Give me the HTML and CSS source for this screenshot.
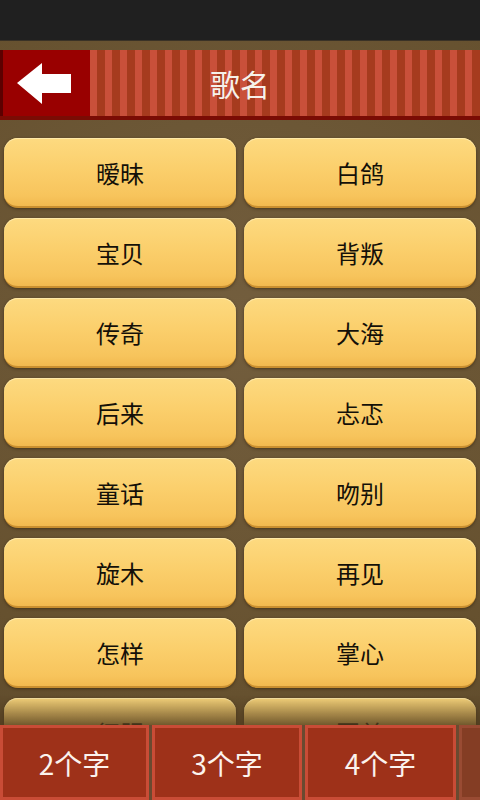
FILE: index.html
```html
<!DOCTYPE html>
<html lang="zh">
<head>
  <meta charset="UTF-8" />
  <title>歌名</title>
  <link rel="stylesheet" href="styles.css">
</head>
<body>
  <div class="status-bar"></div>

  <header class="title-bar">
    <button class="back-btn">
      <svg width="90" height="66" viewBox="0 0 90 66">
        <polygon points="17,33 42,13 42,24 71,24 71,43 42,43 42,54" fill="#ffffff" />
      </svg>
    </button>
    <h1 class="title">歌名</h1>
  </header>

  <div class="song-list">
    <button class="song">暧昧</button>
    <button class="song">白鸽</button>
    <button class="song">宝贝</button>
    <button class="song">背叛</button>
    <button class="song">传奇</button>
    <button class="song">大海</button>
    <button class="song">后来</button>
    <button class="song">忐忑</button>
    <button class="song">童话</button>
    <button class="song">吻别</button>
    <button class="song">旋木</button>
    <button class="song">再见</button>
    <button class="song">怎样</button>
    <button class="song">掌心</button>
    <button class="song">征服</button>
    <button class="song">回首</button>
  </div>

  <div class="list-fade"></div>

  <nav class="tab-bar">
    <button class="tab">2个字</button>
    <button class="tab">3个字</button>
    <button class="tab">4个字</button>
    <button class="tab tab-more"></button>
  </nav>
</body>
</html>
```

FILE: styles.css
```css
body {
  margin: 0;
  height: 800px;
  overflow: hidden;
  font-family: 'Noto Sans CJK SC', 'Noto Sans', sans-serif;
  background-color: #6b5638;
  background-image: radial-gradient(circle at 50% 40%, #735e3e 0%, #66512f 70%, #5e4a2c 100%);
}

button {
  font-family: inherit;
  border: none;
  padding: 0;
  margin: 0;
  cursor: pointer;
}

.status-bar {
  height: 40px;
  background-color: #202020;
  border-bottom: 1px solid #3a3226;
}

.title-bar {
  display: flex;
  align-items: center;
  margin-top: 9px;
  height: 66px;
  border-bottom: 4px solid #7a0c04;
  background-color: #b8442a;
  background-image: repeating-linear-gradient(90deg, #c9503a 0 7px, #a63b1e 7px 15px);
}

.back-btn {
  width: 90px;
  height: 66px;
  flex: none;
  background-color: #990000;
  border-left: 3px solid #5c0000;
  box-sizing: border-box;
  display: flex;
  align-items: center;
  justify-content: center;
}

.back-btn svg {
  display: block;
  margin-left: -3px;
}

.title {
  flex: 1;
  margin: 0 0 0 -90px;
  text-align: center;
  color: #f6f1ea;
  font-size: 30px;
  font-weight: normal;
  line-height: 68px;
  pointer-events: none;
}

.song-list {
  display: grid;
  grid-template-columns: 1fr 1fr;
  column-gap: 8px;
  row-gap: 10px;
  padding: 18px 4px 0;
}

.song {
  height: 70px;
  border-radius: 14px;
  background: linear-gradient(180deg, #fdda80 0%, #fbcf6c 45%, #f7c45c 85%, #f2b94f 100%);
  border-bottom: 2px solid #c98f30;
  box-sizing: border-box;
  box-shadow: 0 1px 3px rgba(40, 25, 5, 0.55), inset 0 1px 0 #ffe9a8;
  color: #141008;
  font-size: 24px;
}

.list-fade {
  position: fixed;
  left: 0;
  right: 0;
  bottom: 75px;
  height: 30px;
  background: linear-gradient(180deg, rgba(80, 60, 30, 0) 0%, rgba(80, 60, 30, 0.8) 100%);
  pointer-events: none;
}

.tab-bar {
  position: fixed;
  left: 0;
  bottom: 0;
  width: 480px;
  height: 75px;
  display: flex;
  gap: 3px;
  background-color: #6a4a30;
  overflow: hidden;
}

.tab {
  flex: none;
  width: 150px;
  height: 75px;
  box-sizing: border-box;
  background-color: #9e3119;
  border: 3px solid #c94c36;
  color: #fbf3ee;
  font-size: 28px;
}

.tab:first-child {
  width: 149px;
}

.tab:nth-child(3) {
  width: 151px;
}

.tab-more {
  opacity: 0.5;
}
```
